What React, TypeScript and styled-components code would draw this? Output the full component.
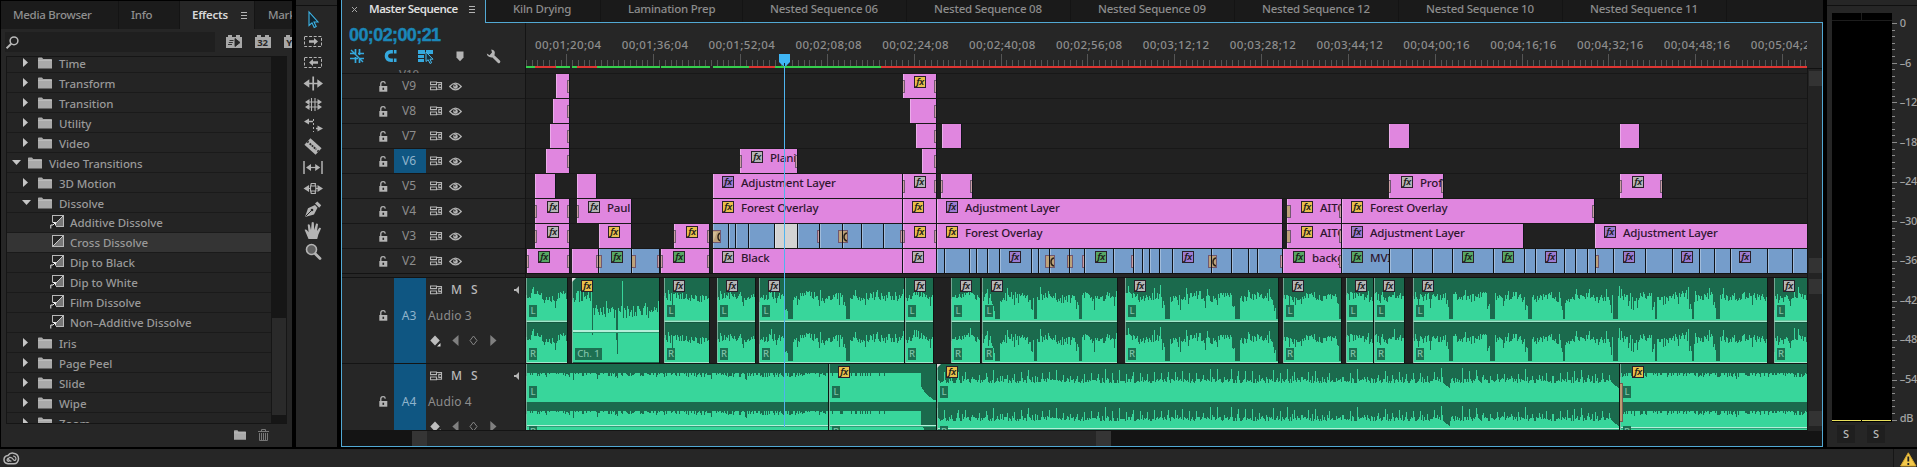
import React from "react";
import styled, { createGlobalStyle } from "styled-components";

const Global = createGlobalStyle`
  *, *::before, *::after { box-sizing: border-box; }
  body { margin: 0; background: #000; overflow: hidden; }
  svg { display: block; flex: none; }
`;

const UI = `"Noto Sans", "Open Sans", sans-serif`;
const BLUE = "#52a9d4";

/* ---------- shell ---------- */

const Shell = styled.div`
  width: 1917px;
  height: 467px;
  display: flex;
  flex-direction: column;
  background: #000;
  color: #9a9a9a;
  font: 500 11.5px/1 ${UI};
  letter-spacing: -0.04px;
  white-space: nowrap;
  overflow: hidden;
  user-select: none;
`;

const Workspace = styled.div`
  flex: none;
  height: 449px;
  display: flex;
`;

/* ---------- effects panel ---------- */

const EffectsPanel = styled.section`
  flex: none;
  width: 291px;
  height: 446px;
  margin: 1px 4px 0 1px;
  background: #262626;
  display: flex;
  flex-direction: column;
  overflow: hidden;
`;

const PanelTabs = styled.div`
  flex: none;
  height: 28px;
  display: flex;
  background: #1b1b1b;
`;

const PanelTab = styled.div<{ $w: number; $pad: number; $active?: boolean }>`
  flex: none;
  width: ${(p) => p.$w}px;
  padding-left: ${(p) => p.$pad}px;
  display: flex;
  align-items: center;
  gap: 13px;
  border-right: 1px solid #141414;
  background: ${(p) => (p.$active ? "#262626" : "#1b1b1b")};
  color: ${(p) => (p.$active ? "#d8d8d8" : "#8f8f8f")};
  font-weight: ${(p) => (p.$active ? 600 : 500)};
  letter-spacing: -0.28px;
`;

const SearchRow = styled.div`
  flex: none;
  height: 27px;
  padding: 3px 0 0 4px;
  display: flex;
`;

const SearchBox = styled.div`
  flex: none;
  width: 210px;
  height: 20px;
  padding: 4px 1px;
  background: #1f1f1f;
`;

const FilterIcons = styled.div`
  display: flex;
  gap: 13px;
  padding: 3px 0 0 11px;
`;

const TreeFrame = styled.div`
  flex: none;
  width: 281px;
  height: 368px;
  margin-left: 5px;
  border: 1px solid #151515;
  border-right: 0;
  display: flex;
  overflow: hidden;
`;

const Tree = styled.div`
  width: 264px;
  margin-top: -4px;
  flex: none;
`;

const TreeRow = styled.div<{ $indent: number; $leaf?: boolean; $selected?: boolean }>`
  height: 20px;
  padding: ${(p) => (p.$leaf ? 0 : 2)}px 0 0 ${(p) => p.$indent}px;
  display: flex;
  align-items: center;
  border-bottom: 1px solid #1a1a1a;
  background: ${(p) => (p.$selected ? "#343434" : "#242424")};
  color: #999;
`;

const Twisty = styled.span`
  width: 16px;
  flex: none;
  margin-top: -2px;
`;

const RowIcon = styled.span<{ $w: number }>`
  width: ${(p) => p.$w}px;
  flex: none;
  margin-top: -2px;
`;

const TreeScroll = styled.div`
  width: 16px;
  padding: 261px 1px 0;
  background: #161616;
`;

const TreeThumb = styled.div`
  height: 97px;
  background: #2a2a2a;
`;

const PanelFooter = styled.div`
  flex: 1;
  display: flex;
  gap: 12px;
  padding: 5px 0 0 233px;
`;

/* ---------- tools ---------- */

const ToolPanel = styled.nav`
  flex: none;
  width: 41px;
  height: 447px;
  background: #262626;
  display: flex;
  flex-direction: column;
`;

const PanelCap = styled.div`
  flex: none;
  height: 6px;
  border-bottom: 1px solid #101010;
`;

const ToolCell = styled.div<{ $first?: boolean }>`
  height: 21px;
  margin-top: ${(p) => (p.$first ? 4 : 0)}px;
  padding-left: 7px;
  display: flex;
  align-items: center;
`;

/* ---------- timeline ---------- */

const Timeline = styled.section`
  flex: none;
  width: 1482px;
  height: 447px;
  margin: 0 4px;
  border: 1px solid ${BLUE};
  border-top: 0;
  border-right: 0;
  background: #262626;
  display: flex;
  flex-direction: column;
`;

const SeqTabs = styled.div`
  flex: none;
  height: 23px;
  display: flex;
`;

const ActiveTab = styled.div`
  width: 143px;
  padding: 0 0 5px 9px;
  display: flex;
  align-items: center;
  color: #dedede;
  font-weight: 600;
  letter-spacing: -0.52px;
`;

const TabName = styled.span`
  flex: none;
  width: 111px;
  padding-left: 11px;
`;

const InactiveTabs = styled.div`
  flex: 1;
  display: flex;
  background: #1a1a1a;
  border-left: 1px solid ${BLUE};
  border-bottom: 1px solid ${BLUE};
`;

const SeqTab = styled.div<{ $w: number }>`
  flex: none;
  width: ${(p) => p.$w}px;
  padding: 0 0 4px 27px;
  display: flex;
  align-items: center;
  border-right: 1px solid #141414;
  color: #8c8c8c;
  letter-spacing: -0.22px;
`;

const Body = styled.div`
  flex: 1;
  min-height: 0;
  display: flex;
  flex-direction: column;
  border-right: 1px solid ${BLUE};
`;

const Upper = styled.div`
  flex: none;
  height: 408px;
  display: flex;
  position: relative;
`;

const HeaderCol = styled.div`
  flex: none;
  width: 184px;
  border-right: 1px solid #141414;
  background: #262626;
`;

const Controls = styled.div`
  height: 45px;
  padding: 3px 0 0 7px;
`;

const Timecode = styled.div`
  height: 18px;
  color: #1b87b8;
  font: bold 18px/18px "Liberation Sans", Arial, sans-serif;
  letter-spacing: -0.6px;
  -webkit-text-stroke: 0.4px #1b87b8;
`;

const ControlIcons = styled.div`
  display: flex;
  height: 18px;
  align-items: center;
  padding: 6px 0 0 1px;
`;

const ControlIcon = styled.span<{ $w: number }>`
  width: ${(p) => p.$w}px;
`;

const Sliver = styled.div<{ $lane?: boolean }>`
  height: 5px;
  padding-left: ${(p) => (p.$lane ? 0 : 57)}px;
  line-height: 11px;
  color: #777;
  overflow: hidden;
  background: ${(p) => (p.$lane ? "#212121" : "#262626")};
`;

const VideoHeader = styled.div`
  height: 25px;
  border-top: 1px solid #171717;
  display: flex;
  align-items: center;
  padding-left: 37px;
`;

const TrackName = styled.div<{ $on?: boolean; $audio?: boolean }>`
  width: 32px;
  align-self: stretch;
  margin: 0 4px 0 6px;
  padding: 0 2px ${(p) => (p.$audio ? 10 : 0)}px 0;
  display: flex;
  align-items: center;
  justify-content: center;
  font-size: 12px;
  font-weight: 400;
  background: ${(p) => (p.$on ? "#0f5682" : "transparent")};
  color: ${(p) => (p.$on ? "#8fb4cc" : "#8d8d8d")};
`;

const LockSlot = styled.span`
  margin-bottom: 10px;
`;

const Divider = styled.div`
  height: 5px;
  background: #262626;
  border-top: 1px solid #131313;
  border-bottom: 1px solid #131313;
`;

const AudioHeader = styled.div<{ $h: number }>`
  height: ${(p) => p.$h}px;
  border-bottom: 1px solid #141414;
  overflow: hidden;
`;

const AudioHeaderInner = styled.div`
  height: 85px;
  display: flex;
  padding-left: 37px;
  align-items: center;
`;

const AudioControls = styled.div`
  flex: 1;
  margin-left: -2px;
  height: 85px;
  font-size: 12px;
  font-weight: 400;
  color: #8d8d8d;
`;

const AudioTop = styled.div`
  height: 24px;
  display: flex;
  align-items: center;
  padding-left: 2px;
  color: #b9b9b9;
  font-size: 12px;
  font-weight: 500;
`;

const Cell = styled.span<{ $w: number }>`
  flex: none;
  width: ${(p) => p.$w}px;
`;

const AudioTitle = styled.div`
  height: 27px;
  line-height: 27px;
  letter-spacing: 0.15px;
`;

const KeyRow = styled.div`
  height: 23px;
  display: flex;
  align-items: center;
  padding-left: 2px;
`;

const LaneCol = styled.div`
  flex: none;
  width: 1281px;
  overflow: hidden;
`;

const Ruler = styled.div`
  height: 45px;
  display: flex;
  flex-direction: column;
  overflow: hidden;
`;

const RulerLabels = styled.div`
  height: 31px;
  margin-left: -1.2px;
  padding-top: 16px;
  display: flex;
  font-size: 11.5px;
  letter-spacing: 0.42px;
  color: #8d8d8d;
`;

const RulerLabel = styled.span`
  flex: none;
  width: 86.85px;
  text-align: center;
`;

const RenderBar = styled.div`
  flex: none;
  height: 2px;
  display: flex;
`;

const RenderSeg = styled.i<{ $c: string }>`
  flex: none;
  background: ${(p) => p.$c};
`;

const Lane = styled.div`
  height: 25px;
  border-top: 1px solid #181818;
  background: #212121;
  display: flex;
`;

const COLORS: Record<string, string> = {
  p: "#e086df",
  b: "#759dcb",
  w: "#d3d3d3",
};

const ClipBox = styled.div<{ $kind: string }>`
  flex: none;
  height: 24px;
  display: flex;
  position: relative;
  background: ${(p) => COLORS[p.$kind]};
  box-shadow: 1px 0 0 #10131a, inset 1px 0 0 rgba(255, 255, 255, 0.32);
`;

const ClipContent = styled.div`
  display: flex;
  overflow: hidden;
  padding-top: 2px;
  min-width: 0;
  flex: 1;
`;

const ClipName = styled.span`
  margin: -1px 0 0 7px;
  color: #2e152e;
  font-size: 11.5px;
  font-weight: 500;
  line-height: 15px;
  letter-spacing: -0.16px;
`;

const FX: Record<string, string> = {
  y: "#e8bf4b",
  g: "#b5b5b5",
  u: "#9c7bd0",
  n: "#57a764",
};

const FxBadge = styled.span<{ $c: string }>`
  display: block;
  flex: none;
  width: 12px;
  height: 12px;
  border: 1px solid #2a1f2a;
  background: ${(p) => FX[p.$c]};
  color: #191919;
  font: italic 600 9.5px/9px "Noto Sans", sans-serif;
  letter-spacing: -0.4px;
  text-align: center;
  overflow: hidden;
`;

const Transition = styled.i<{ $side: "l" | "r"; $size: number }>`
  position: absolute;
  top: 6px;
  ${(p) => (p.$side === "l" ? "left: 0;" : "right: 0;")}
  width: ${(p) => (p.$size > 1 ? p.$size : 2)}px;
  height: 13px;
  background: ${(p) => (p.$size > 1 ? "#bda27a" : "#cba0a4")};
  border: 1px solid #715870;
  border-${(p) => (p.$side === "l" ? "left" : "right")}: 0;
`;

const TransitionMark = styled.svg`
  margin-top: 1px;
`;

const AudioLane = styled.div<{ $h: number }>`
  height: ${(p) => p.$h}px;
  border-bottom: 1px solid #141414;
  background: #212121;
  display: flex;
  overflow: hidden;
`;

const AudioClip = styled.div`
  flex: none;
  height: 85px;
  position: relative;
  background: #1b6a4d;
  box-shadow: 1px 0 0 #0d1512;
`;

const AudioBadge = styled.div`
  position: absolute;
  top: 2px;
`;

const AudioTransition = styled.i`
  position: absolute;
  left: 0;
  top: 19px;
  width: 3px;
  height: 39px;
  background: #bb9b73;
  border: 1px solid #7c5b52;
  border-left: 0;
`;

const Channel = styled.span<{ $top: number; $w?: number }>`
  position: absolute;
  left: 3px;
  top: ${(p) => p.$top}px;
  width: ${(p) => p.$w ?? 8}px;
  height: 12px;
  background: #1d7052;
  color: #7fc2a8;
  font-size: 9.5px;
  font-weight: 500;
  line-height: 12px;
  text-align: center;
`;

const ScrollCol = styled.div`
  flex: 1;
  padding-left: 1px;
  display: flex;
  flex-direction: column;
  background: #232323;
  border-left: 1px solid #151515;
`;

const ScrollHead = styled.div`
  height: 46px;
  margin-left: -2px;
  background: #262626;
  border-bottom: 1px solid #111;
`;

const VThumb = styled.i<{ $mt: number; $h?: number }>`
  height: ${(p) => p.$h ?? 15}px;
  margin-top: ${(p) => p.$mt}px;
  background: #333;
`;

const HScroll = styled.div`
  flex: 1;
  display: flex;
  background: #141414;
  padding-left: 70px;
`;

const HThumb = styled.div`
  width: 699px;
  background: #262626;
  border: solid #353535;
  border-width: 0 15px;
`;

const Playhead = styled.div`
  position: absolute;
  left: 437px;
  top: 31px;
  width: 11px;
  height: 373px;
`;

/* ---------- meters ---------- */

const Meters = styled.aside`
  width: 90px;
  height: 447px;
  background: #262626;
  display: flex;
  flex-direction: column;
`;

const MeterMain = styled.div`
  display: flex;
  padding: 7px 0 0 5px;
  height: 418px;
`;

const MeterBars = styled.div`
  width: 60px;
  height: 409px;
  display: grid;
  grid-template-columns: 1fr 1fr;
  grid-template-rows: 8px 1fr;
  background: #000;
`;

const MeterCap = styled.i`
  border-bottom: 1px solid #1d1d1d;
  &:first-child { border-right: 1px solid #1d1d1d; }
`;

const MeterBar = styled.i`
  margin: 0 1px 1px 0;
  border-bottom: 1px solid #e9e05c;
`;

const MeterScale = styled.div`
  display: flex;
`;

const ScaleLabels = styled.div`
  margin-left: 2px;
  padding-top: 3px;
  color: #a3a3a3;
  font-size: 11px;
  letter-spacing: -0.3px;
`;

const ScaleLabel = styled.div`
  height: 39.5px;
  line-height: 14px;
`;

const SoloRow = styled.div`
  display: flex;
  gap: 12px;
  padding: 1px 0 0 10px;
`;

const Solo = styled.button`
  width: 18px;
  height: 18px;
  padding: 0;
  border: 0;
  background: #1f1f1f;
  color: #b9b9b9;
  font: 500 11px/16px ${UI};
`;

const StatusBar = styled.footer`
  height: 18px;
  background: #262626;
  display: flex;
  justify-content: space-between;
  padding-left: 3px;
`;

const Alerts = styled.div`
  width: 24px;
  padding: 3px 0 0 6px;
  border-left: 1px solid #161616;
`;

/* ---------- icons ---------- */

const C = "#b4b4b4";

const Burger = ({ color = C }: { color?: string }) => (
  <svg width="6" height="9" stroke={color} shapeRendering="crispEdges">
    <path d="M0 1.5H6M0 4.5H6M0 7.5H6" />
  </svg>
);

const Folder = ({ w = 14, h = 12 }: { w?: number; h?: number }) => (
  <svg width={w} height={h} viewBox="0 0 14 12">
    <path d="M0 1.2Q0 .5 .8 .5H4L5.2 2H13.4Q14 2 14 2.8V11.5H0Z" fill="#a9a9a9" />
    <path d="M0 3.5H14" stroke="#c2c2c2" strokeWidth=".7" />
  </svg>
);

const Arrow = ({ open }: { open?: boolean }) => (
  <svg width="9" height="9">
    <path d={open ? "M0 2H9L4.5 7Z" : "M1 0V9L6 4.5Z"} fill="#c6c6c6" />
  </svg>
);

const Effect = ({ tag }: { tag?: boolean }) => (
  <svg width="15" height="15" viewBox="0 0 15 15">
    <rect x="2.5" y="1.5" width="11" height="11" fill="#262626" stroke="#b9b9b9" />
    <path d="M13 2V12H3Z" fill="#777" />
    <path d="M3 12L13 2" stroke="#c9c9c9" />
    {tag && (
      <g>
        <rect x="0" y="8" width="6" height="6" fill="#1c1c1c" />
        <path d="M2.5 8.5H5.5V11.5M5.5 8.5L3 11M3 11H.8V14.5" fill="none" stroke="#eee" />
      </g>
    )}
  </svg>
);

const Filter = ({ text, w = 16 }: { text?: string; w?: number }) => (
  <svg width={w} height="14" viewBox={`0 0 ${w} 14`}>
    <path d="M0 2H2V0H6V2H10V0H14V2H16V13H0Z" fill="#a8a8a8" />
    {text ? (
      <text x="2.2" y="11" fontFamily="Noto Sans" fontWeight="700" fontSize="9.5" letterSpacing="0" fill="#262626">
        {text}
      </text>
    ) : (
      <path d="M9 3.5V11.5L14 7.5ZM3.5 5.5H7.5M2.8 7.5H6.8M2 9.5H6" fill="#262626" stroke="#262626" strokeWidth=".9" />
    )}
  </svg>
);

const Magnifier = () => (
  <svg width="13" height="13" fill="none" stroke="#b8b8b8" strokeWidth="1.5">
    <circle cx="8" cy="4.8" r="3.9" />
    <path d="M5.2 7.8L.6 12.3" strokeWidth="1.9" />
  </svg>
);

const Trash = () => (
  <svg width="11" height="12" fill="none" stroke="#777">
    <path d="M0 2.5H11M3.5 2V.5H7.5V2M1.5 4V11.5H9.5V4M3.5 4V11M5.5 4V11M7.5 4V11" />
  </svg>
);

const toolShapes: React.ReactNode[] = [
  <path d="M6 2V15.5L9 12.8L11.2 17.5L13.2 16.5L11 12H15Z" fill="#10242f" stroke="#3fb4e6" strokeWidth="1.1" />,
  <>
    <rect x="1.5" y="5.5" width="17" height="10" fill="none" stroke={C} strokeDasharray="3 1.6" />
    <path d="M6 9.2H11V7L15 10.5L11 14V11.8H6Z" fill={C} />
  </>,
  <>
    <rect x="1.5" y="5.5" width="17" height="10" fill="none" stroke={C} strokeDasharray="3 1.6" />
    <path d="M15 9.2H10V7L6 10.5L10 14V11.8H15Z" fill={C} />
  </>,
  <>
    <path d="M10.2 3.5V17.5M4 10.5H17" stroke={C} strokeWidth="1.7" />
    <path d="M.5 10.5L6.3 6.3V14.7ZM20 10.5L14.3 6.3V14.7Z" fill={C} />
  </>,
  <>
    <path d="M8.5 4V17M12 4V17M5 8H16M5 13H16" stroke={C} strokeWidth="1.1" />
    <path d="M2 8L6.5 5V11ZM19 8L14.5 5V11ZM2 13L6.5 10V16ZM19 13L14.5 10V16Z" fill={C} />
  </>,
  <>
    <path d="M4 6.5H10M13 13.5H16" stroke={C} strokeWidth="1.3" />
    <path d="M1 6.5L6 3.5V9.5ZM20 13.5L14.5 10.5V16.5Z" fill={C} />
    <path d="M10.5 4V17" stroke={C} strokeDasharray="2 2" />
  </>,
  <g transform="rotate(42 10 10.5)">
    <rect x="2.5" y="6" width="15" height="9" fill={C} />
    <path d="M5.5 10.5H14.5" stroke="#2a2a2a" strokeWidth="1.8" strokeDasharray="2 .8" />
    <path d="M2.5 10.5H4M16 10.5H17.5" stroke="#262626" strokeWidth="2" />
  </g>,
  <>
    <path d="M1 4V17M19 4V17" stroke={C} strokeWidth="1.5" />
    <path d="M5 10.5H15" stroke={C} strokeWidth="1.2" />
    <path d="M3 10.5L8 7V14ZM17.2 10.5L12.2 7V14Z" fill={C} />
  </>,
  <>
    <path d="M.5 10.5L6 7V14ZM20 10.5L14.5 7V14Z" fill={C} />
    <path d="M5 10.5H7.2M13 10.5H15M7.5 8V13H12.8V8ZM8 5.5H12.3V8M8 5.5V8M8 15.5H12.3V13M8 15.5V13" fill="none" stroke={C} strokeWidth="1.2" />
  </>,
  <>
    <path d="M2 18L5 9.2L12 6L14.5 8.8L11 15.5Z" fill={C} />
    <path d="M12 4.5L14.3 2.5L18.2 6.3L16.2 8.7Z" fill={C} />
    <path d="M2.5 17.5L8.5 11.5" stroke="#262626" />
    <circle cx="9" cy="11" r="1.3" fill="#262626" />
  </>,
  <path d="M5.5 19L3 13L1.6 9.8Q3 8.8 4.3 10.5L5.6 12.3L4.7 4.8Q5.6 3.6 6.7 4.8L8 10L8.7 2.6Q9.8 1.5 10.8 2.6L11.2 10L13 3.8Q14.2 3 15 4.2L14 11L16.3 7.8Q17.6 7.3 18 8.6L15.4 14.5L14.2 19Z" fill={C} />,
  <>
    <path d="M11.5 12L17 17.5" stroke={C} strokeWidth="2.8" strokeLinecap="round" />
    <circle cx="8.5" cy="8.5" r="5" fill="#606060" stroke={C} strokeWidth="1.6" />
  </>,
];

const Lock = () => (
  <svg width="9" height="11">
    <path d="M1.8 5V2.6Q2 .7 4.2 .7Q6 .7 6.3 2.6" fill="none" stroke={C} strokeWidth="1.3" />
    <rect x=".3" y="5" width="8" height="5.7" fill={C} />
    <rect x="3.5" y="6.7" width="1.6" height="2.2" fill="#262626" />
  </svg>
);

const Sync = () => (
  <svg width="13" height="10" fill="none" stroke={C} strokeWidth="1.1">
    <path d="M.5 1H6.5V3.6H.5ZM.5 6H6.5V8.8H.5ZM6.5 1.5H11.5V8.2H6.5M8.8 3.4H11.5V6.4H8.8Z" />
  </svg>
);

const Eye = () => (
  <svg width="13" height="9">
    <path d="M.7 4.5Q6.5 -2.2 12.3 4.5Q6.5 11.2 .7 4.5Z" fill="none" stroke={C} strokeWidth="1.2" />
    <circle cx="6.5" cy="4.4" r="2.3" fill={C} />
    <circle cx="5.9" cy="3.8" r=".8" fill="#262626" />
  </svg>
);

const FxMark = ({ c }: { c: string }) => <FxBadge $c={c}>fx</FxBadge>;

/* ---------- data ---------- */

const X0 = 526;

/** l and r give the size of the transition at each end; 1 is the narrow kind. */
type Clip = {
  s: number;
  e: number;
  k: string;
  fx?: string;
  at?: number;
  name?: string;
  l?: number;
  r?: number;
};

const clip = (s: number, e: number, k = "p", o: Partial<Clip> = {}): Clip => ({ s, e, k, ...o });

/** Splits a run of footage at each cut point; marks add details to a piece by its index. */
const run = (start: number, cuts: number[], marks: Record<number, Partial<Clip>> = {}) =>
  cuts.map((e, i) => clip(i ? cuts[i - 1] + 1 : start, e, "b", marks[i]));

const videoTracks: { name: string; on?: boolean; clips: Clip[] }[] = [
  { name: "V9", clips: [clip(556, 569, "p", { r: 1 }), clip(903, 936, "p", { fx: "y", at: 914, l: 1, r: 1 })] },
  { name: "V8", clips: [clip(553, 569, "p", { r: 1 }), clip(910, 936, "p", { r: 1 })] },
  {
    name: "V7",
    clips: [clip(550, 569, "p", { r: 1 }), clip(916, 936, "p", { r: 1 }), clip(942, 961), clip(1389, 1409), clip(1620, 1639)],
  },
  {
    name: "V6",
    on: true,
    clips: [
      clip(546, 569, "p", { r: 1 }),
      clip(740, 797, "p", { fx: "g", at: 751, name: "Plani", l: 1, r: 1 }),
      clip(922, 936, "p", { r: 1 }),
    ],
  },
  {
    name: "V5",
    clips: [
      clip(535, 555),
      clip(577, 596),
      clip(713, 902, "p", { fx: "u", at: 722, name: "Adjustment Layer" }),
      clip(903, 936, "p", { fx: "g", at: 914, l: 1, r: 1 }),
      clip(941, 972, "p", { l: 1, r: 1 }),
      clip(1389, 1443, "p", { fx: "g", at: 1401, name: "Prof", l: 1, r: 1 }),
      clip(1620, 1662, "p", { fx: "g", at: 1632, l: 1, r: 1 }),
    ],
  },
  {
    name: "V4",
    clips: [
      clip(535, 569, "p", { fx: "g", at: 547, l: 1, r: 1 }),
      clip(577, 631, "p", { fx: "g", at: 588, name: "Paul", l: 1 }),
      clip(713, 902, "p", { fx: "y", at: 722, name: "Forest Overlay" }),
      clip(903, 936, "p", { fx: "y", at: 912 }),
      clip(937, 1282, "p", { fx: "u", at: 946, name: "Adjustment Layer" }),
      clip(1287, 1341, "p", { fx: "y", at: 1301, name: "AITC", l: 4, r: 1 }),
      clip(1342, 1594, "p", { fx: "y", at: 1351, name: "Forest Overlay", r: 1 }),
    ],
  },
  {
    name: "V3",
    clips: [
      clip(535, 569, "p", { fx: "g", at: 547, l: 1, r: 1 }),
      clip(599, 631, "p", { fx: "y", at: 608 }),
      clip(674, 709, "p", { fx: "y", at: 686, l: 1, r: 1 }),
      clip(713, 728, "b", { l: 8 }),
      ...run(729, [735, 748, 774]),
      clip(775, 797, "w"),
      ...run(798, [819, 842, 861, 883, 902], { 0: { r: 1 }, 1: { r: 4 }, 2: { l: 5 }, 4: { r: 1 } }),
      clip(903, 936, "p", { fx: "y", at: 914, l: 1, r: 1 }),
      clip(937, 1282, "p", { fx: "y", at: 946, name: "Forest Overlay" }),
      clip(1287, 1341, "p", { fx: "y", at: 1301, name: "AITC", l: 4, r: 1 }),
      clip(1342, 1523, "p", { fx: "u", at: 1351, name: "Adjustment Layer" }),
      clip(1595, 1807, "p", { fx: "u", at: 1604, name: "Adjustment Layer" }),
    ],
  },
  {
    name: "V2",
    clips: [
      clip(527, 569, "p", { fx: "n", at: 538, l: 1, r: 1 }),
      clip(572, 598, "p", { r: 1 }),
      clip(599, 631, "b", { fx: "n", at: 611, l: 3 }),
      clip(632, 659, "b", { l: 4, r: 1 }),
      clip(661, 709, "p", { fx: "n", at: 673, l: 1, r: 1 }),
      clip(713, 902, "p", { fx: "g", at: 722, name: "Black" }),
      clip(903, 936, "p", { fx: "g", at: 912 }),
      ...run(937, [944, 969, 976, 987, 999, 1031, 1038, 1049, 1069, 1084, 1113, 1133, 1142, 1149, 1159, 1172, 1211, 1231, 1248, 1257, 1282], {
        5: { fx: "u", at: 1009 },
        7: { r: 4 },
        8: { l: 5, r: 2 },
        9: { l: 3, r: 1 },
        10: { fx: "n", at: 1095 },
        11: { r: 1 },
        16: { fx: "u", at: 1182, r: 3 },
        17: { l: 5 },
        20: { r: 1 },
      }),
      clip(1283, 1341, "p", { fx: "n", at: 1293, name: "backg", r: 1 }),
      ...run(1342, [1389, 1412, 1432, 1452, 1493, 1524, 1535, 1564, 1575, 1587, 1595, 1613, 1645, 1672, 1699, 1714, 1730, 1767, 1792, 1807], {
        0: { fx: "n", at: 1351, name: "MVI_" },
        4: { fx: "n", at: 1462 },
        5: { fx: "n", at: 1502 },
        7: { fx: "u", at: 1545 },
        11: { l: 3 },
        12: { fx: "u", at: 1623 },
        14: { fx: "u", at: 1681 },
        17: { fx: "u", at: 1739 },
      }),
    ],
  },
];

type Audio = {
  s: number;
  e: number;
  type: "stereo" | "mono" | "flat" | "peaks";
  fx?: [string, number];
  dips?: [number, number][];
  seed: number;
  line?: number;
  fade?: boolean;
  corner?: boolean;
  transition?: boolean;
};

const a3: Audio[] = [
  { s: 526, e: 567, type: "stereo", seed: 5 },
  { s: 572, e: 659, type: "mono", seed: 11, fx: ["y", 581], corner: true },
  { s: 664, e: 709, type: "stereo", seed: 21, fx: ["g", 673] },
  { s: 717, e: 755, type: "stereo", seed: 31, fx: ["g", 726] },
  { s: 759, e: 904, type: "stereo", seed: 41, fx: ["g", 768], dips: [[788, 792], [846, 849]] },
  { s: 905, e: 933, type: "stereo", seed: 51, fx: ["g", 914] },
  { s: 951, e: 980, type: "stereo", seed: 61, fx: ["g", 960] },
  { s: 982, e: 1117, type: "stereo", seed: 71, fx: ["g", 991], dips: [[995, 999], [1034, 1036], [1079, 1081]] },
  { s: 1125, e: 1278, type: "stereo", seed: 81, fx: ["g", 1134], dips: [[1165, 1169], [1235, 1239], [1276, 1278]] },
  { s: 1283, e: 1341, type: "stereo", seed: 91, fx: ["g", 1292], dips: [[1339, 1341]] },
  { s: 1346, e: 1373, type: "stereo", seed: 101, fx: ["g", 1355] },
  { s: 1374, e: 1404, type: "stereo", seed: 111, fx: ["g", 1383] },
  {
    s: 1413, e: 1767, type: "stereo", seed: 121, fx: ["g", 1422],
    dips: [[1449, 1452], [1490, 1494], [1528, 1531], [1563, 1564], [1613, 1617], [1655, 1656], [1692, 1693], [1716, 1719]],
  },
  { s: 1774, e: 1807, type: "stereo", seed: 131, fx: ["g", 1783] },
];

const a4: Audio[] = [
  { s: 526, e: 828, type: "flat", seed: 7, line: 61 },
  { s: 829, e: 936, type: "flat", seed: 17, line: 61, fx: ["y", 838], fade: true },
  { s: 937, e: 1619, type: "peaks", seed: 27, line: 64, fx: ["y", 946], corner: true, dips: [[1443, 1449]] },
  { s: 1620, e: 1807, type: "flat", seed: 37, line: 63, fx: ["y", 1632], transition: true },
];

/* ---------- waveforms ---------- */

const random = (seed: number) => {
  let s = (seed * 7919 + 13) % 233280;
  return () => {
    s = (s * 9301 + 49297) % 233280;
    return s / 233280;
  };
};

const levels = (a: Audio): number[] => {
  const rnd = random(a.seed);
  const out: number[] = [];
  for (let x = a.s; x < a.e; x++) {
    const r = rnd();
    const q = rnd();
    const dip = a.dips?.find(([f, t]) => x >= f && x <= t);
    let v: number;
    if (a.type === "stereo") {
      v = 19 + Math.sin(x / 5.3 + a.seed) * 2 + (r - 0.5) * 8;
      if (q > 0.93) v -= 6;
      else if (q < 0.05) v += 8;
      if (dip) v = 41;
      else if (a.dips?.some(([f]) => f - x > 0 && f - x < 4)) v += 9;
    } else if (a.type === "mono") {
      v = (x < 592 ? 18 : 34) + (r - 0.5) * 13;
      if (q > 0.85) v -= 9;
      if (x === 622) v = 3;
      if (x === 616 || x === 617) v = x === 616 ? 62 : 76;
      if (x === 592) v = 57;
    } else if (a.type === "flat") {
      v = 9 + (r > 0.55 ? (r - 0.5) * 9 : 0) + (q > 0.96 ? 3 : 0);
      if (a.fade) v = 9 + (x < 885 && r > 0.7 ? 3 : 0);
      if (a.fade && x > 920) v = Math.min(36, 18 + Math.sqrt((x - 920) * 24));
    } else {
      v = 17 + (r - 0.5) * 5;
      if ((x - 937) % 7 === 0) v -= 5 + q * 7;
      else if ((x - 937) % 5 === 0) v -= 4 * q;
      if (dip) v = 17 + (x - 1441) * 0.9;
      if (x > 1610) v = 17 + (x - 1610) * 0.9;
    }
    out.push(Math.round(v));
  }
  return out;
};

const area = (v: number[], top: number, floor: number) => {
  let d = `M0 ${floor}`;
  v.forEach((y, i) => (d += `V${Math.min(floor, top + y)}H${i + 1}`));
  return d + `V${floor}Z`;
};

const Waveform = ({ a }: { a: Audio }) => {
  const w = a.e - a.s;
  const v = levels(a);
  const bright = "#38d69b";
  return (
    <svg width={w} height="85" shapeRendering="crispEdges">
      {a.type === "stereo" && (
        <>
          <path d={area(v, 0, 42)} fill={bright} />
          <path d={area(v, 42, 84)} fill={bright} />
          <path d={`M0 43.5H${w}M0 84.5H${w}`} stroke="#9fe8cb" />
          <path d={`M0 42.5H${w}`} stroke="#67c9a0" />
          <path d={`M0 44.5H${w}`} stroke="#175740" />
        </>
      )}
      {a.type === "mono" && (
        <>
          <path d={area(v, 0, 84)} fill={bright} />
          <path d={`M1 53H${w}`} stroke="#b4efd9" strokeWidth="2" />
          <path d={`M1 54.5H${w}`} stroke="#2a9a70" />
        </>
      )}
      {(a.type === "flat" || a.type === "peaks") && (
        <>
          <path d={area(v, 0, 38)} fill={bright} />
          <path d={area(v, 38, 85)} fill={bright} />
          <path d={`M1 ${a.line! + 0.5}H${w}`} stroke="#b4efd9" strokeWidth="1" />
          <path d={`M1 ${a.line! + 1.5}H${w}`} stroke="#2f9f77" strokeWidth="1" />
        </>
      )}
      <path d="M.5 0V85" stroke="#8fb9a8" opacity=".75" />
      {a.corner && <path d="M0 0H4L0 4Z" fill="#ddd" shapeRendering="auto" />}
    </svg>
  );
};

const AudioTrack = ({ clips, h }: { clips: Audio[]; h: number }) => (
  <AudioLane $h={h}>
    {clips.map((a, i) => (
      <AudioClip key={a.s} style={{ marginLeft: a.s - (i ? clips[i - 1].e : X0), width: a.e - a.s }}>
        <Waveform a={a} />
        {a.fx && (
          <AudioBadge style={{ left: a.fx[1] - a.s }}>
            <FxMark c={a.fx[0]} />
          </AudioBadge>
        )}
        {a.type === "mono" ? (
          <Channel $top={70} $w={27}>Ch. 1</Channel>
        ) : (
          <>
            <Channel $top={a.type === "stereo" ? 27 : 22}>L</Channel>
            <Channel $top={a.type === "stereo" ? 70 : 62}>R</Channel>
          </>
        )}
        {a.transition && <AudioTransition />}
      </AudioClip>
    ))}
  </AudioLane>
);

const CrossMark = ({ w }: { w: number }) => (
  <TransitionMark width={w - 1} height="10" viewBox={`${w > 6 ? 0 : 4} 0 ${w - 1} 10`}>
    <path d="M0 0V10L4 0Z" fill="#d1bb94" />
    <path d="M8 1Q5 1.5 5 5Q5 8.5 8 9" fill="none" stroke="#2b2117" strokeWidth="1.4" />
  </TransitionMark>
);

const VideoLane = ({ clips }: { clips: Clip[] }) => (
  <Lane>
    {clips.map((c, i) => (
      <ClipBox key={c.s} $kind={c.k} style={{ marginLeft: c.s - (i ? clips[i - 1].e : X0), width: c.e - c.s }}>
        {c.l && (
          <Transition $side="l" $size={c.l}>
            {c.l > 4 && <CrossMark w={c.l} />}
          </Transition>
        )}
        <ClipContent style={{ paddingLeft: c.at ? c.at - c.s : 0 }}>
          {c.fx && <FxMark c={c.fx} />}
          {c.name && <ClipName>{c.name}</ClipName>}
        </ClipContent>
        {c.r && <Transition $side="r" $size={c.r} />}
      </ClipBox>
    ))}
  </Lane>
);

/* ---------- ruler ---------- */

const PITCH = 86.85;
const labels = [
  "00;01;20;04", "00;01;36;04", "00;01;52;04", "00;02;08;08", "00;02;24;08", "00;02;40;08", "00;02;56;08", "00;03;12;12",
  "00;03;28;12", "00;03;44;12", "00;04;00;16", "00;04;16;16", "00;04;32;16", "00;04;48;16", "00;05;04;20",
];

const ticks = (() => {
  let d = "";
  for (let i = -7; i < 15 * 15; i++) {
    const x = Math.floor(40.8 + (i * PITCH) / 15) + 0.5;
    d += `M${x} ${i % 15 === 0 ? 0 : 6}V12`;
  }
  return d;
})();

const G = "#35cf4d";
const R = "#df3532";
const N = "transparent";
const render: [number, string][] = [
  [9, G], [21, R], [14, G], [2, N], [5, G], [20, R], [63, G], [1, N], [49, G], [3, N], [36, G], [26, R], [106, G], [926, R],
];

/* ---------- tree ---------- */

const tree: [string, string, boolean?][] = [
  ["f2", "Time"], ["f2", "Transform"], ["f2", "Transition"], ["f2", "Utility"], ["f2", "Video"],
  ["f1", "Video Transitions", true], ["f2", "3D Motion"], ["f2", "Dissolve", true],
  ["e", "Additive Dissolve"], ["s", "Cross Dissolve"], ["e", "Dip to Black"], ["e", "Dip to White"],
  ["e", "Film Dissolve"], ["e", "Non–Additive Dissolve"],
  ["f2", "Iris"], ["f2", "Page Peel"], ["f2", "Slide"], ["f2", "Wipe"], ["f2", "Zoom"],
];

const scaleTicks = (() => {
  let d = "";
  for (let i = 0; i <= 60; i++) {
    const y = Math.round(10 + i * 6.61) + 0.5;
    d += `M0 ${y}H${i % 6 === 0 ? 5 : 3}`;
  }
  return d;
})();

const AudioHead = ({ n, h }: { n: number; h: number }) => (
  <AudioHeader $h={h}>
    <AudioHeaderInner>
      <LockSlot><Lock /></LockSlot>
      <TrackName $on $audio>A{n}</TrackName>
      <AudioControls>
        <AudioTop>
          <Cell $w={21}><Sync /></Cell>
          <Cell $w={20}>M</Cell>
          <Cell $w={43}>S</Cell>
          <svg width="5" height="8"><path d="M5 0V8L2 5H0V3H2Z" fill={C} /></svg>
        </AudioTop>
        <AudioTitle>Audio {n}</AudioTitle>
        <KeyRow>
          <Cell $w={22}>
            <svg width="11" height="12">
              <path d="M5 .5L9.8 5.5L5 10.5L.3 5.5Z" fill="#bdbdbd" />
              <path d="M10.5 8V11.5H7Z" fill="#ddd" />
            </svg>
          </Cell>
          <Cell $w={17}><svg width="7" height="11"><path d="M6.5 0V11L.3 5.5Z" fill="#808080" /></svg></Cell>
          <Cell $w={21}><svg width="9" height="11"><path d="M4.5 1L8 5.5L4.5 10L1 5.5Z" fill="none" stroke="#858585" /></svg></Cell>
          <svg width="7" height="11"><path d="M.3 0V11L6.5 5.5Z" fill="#808080" /></svg>
        </KeyRow>
      </AudioControls>
    </AudioHeaderInner>
  </AudioHeader>
);

export default function App() {
  return (
    <Shell>
      <Global />
      <Workspace>
        <EffectsPanel>
          <PanelTabs>
            <PanelTab $w={118} $pad={12}>Media Browser</PanelTab>
            <PanelTab $w={61} $pad={12}>Info</PanelTab>
            <PanelTab $w={75} $pad={12} $active>Effects <Burger /></PanelTab>
            <PanelTab $w={60} $pad={13}>Markers</PanelTab>
          </PanelTabs>
          <SearchRow>
            <SearchBox><Magnifier /></SearchBox>
            <FilterIcons>
              <Filter />
              <Filter text="32" />
              <Filter text="YU" />
            </FilterIcons>
          </SearchRow>
          <TreeFrame>
            <Tree>
              {tree.map(([kind, label, open]) => {
                const leaf = kind === "e" || kind === "s";
                return (
                  <TreeRow key={label} $indent={leaf ? 43 : kind === "f1" ? 5 : 15} $leaf={leaf} $selected={kind === "s"}>
                    {!leaf && <Twisty><Arrow open={open} /></Twisty>}
                    <RowIcon $w={leaf ? 20 : 21}>{leaf ? <Effect tag={kind === "e"} /> : <Folder />}</RowIcon>
                    {label}
                  </TreeRow>
                );
              })}
            </Tree>
            <TreeScroll><TreeThumb /></TreeScroll>
          </TreeFrame>
          <PanelFooter>
            <Folder w={12} h={12} />
            <Trash />
          </PanelFooter>
        </EffectsPanel>

        <ToolPanel>
          <PanelCap />
          {toolShapes.map((shape, i) => (
            <ToolCell key={i} $first={i === 0}>
              <svg width="21" height="21">{shape}</svg>
            </ToolCell>
          ))}
        </ToolPanel>

        <Timeline>
          <SeqTabs>
            <ActiveTab>
              <svg width="7" height="7" stroke="#a8a8a8"><path d="M1 1L6 6M6 1L1 6" /></svg>
              <TabName>Master Sequence</TabName>
              <Burger />
            </ActiveTab>
            <InactiveTabs>
              <SeqTab $w={115}>Kiln Drying</SeqTab>
              <SeqTab $w={142}>Lamination Prep</SeqTab>
              {["06", "08", "09", "12", "10", "11"].map((n) => (
                <SeqTab key={n} $w={164}>Nested Sequence {n}</SeqTab>
              ))}
            </InactiveTabs>
          </SeqTabs>
          <Body>
            <Upper>
              <HeaderCol>
                <Controls>
                  <Timecode>00;02;00;21</Timecode>
                  <ControlIcons>
                    <ControlIcon $w={34}>
                      <svg width="15" height="14" stroke="#35a9de" strokeWidth="1.7">
                        <path d="M0 4.5H5M8 4.5H14M0 9.5H8M10 9.5H14M5.5 0V5M5.5 8V14M9.5 0V6M9.5 10V14" />
                        <path d="M1 1L13 13" strokeWidth="1.4" />
                      </svg>
                    </ControlIcon>
                    <ControlIcon $w={34}>
                      <svg width="14" height="14">
                        <path d="M12.5 2.7H7Q2.4 3 2.4 7Q2.4 11 7 11.3H12.5" fill="none" stroke="#35a9de" strokeWidth="3.4" />
                        <path d="M9.4 0V14" stroke="#262626" strokeWidth="1" />
                      </svg>
                    </ControlIcon>
                    <ControlIcon $w={38}>
                      <svg width="17" height="15">
                        <path d="M0 1H7V5H0ZM8 1H15V5H8ZM0 6H6V9H0ZM0 10H6V13H0Z" fill="#35a9de" />
                        <path d="M8 3V12.5L10.2 10.7L12 14.5L13.6 13.7L12 10.2H15Z" fill="#15303d" stroke="#4bb9ea" />
                      </svg>
                    </ControlIcon>
                    <ControlIcon $w={30}>
                      <svg width="8" height="11"><path d="M.5 .5H7.5V6.5L4 10.2L.5 6.5Z" fill={C} /></svg>
                    </ControlIcon>
                    <svg width="15" height="15">
                      <path d="M6 6L12.8 12.6" stroke={C} strokeWidth="3" strokeLinecap="round" />
                      <path d="M5.2 .6Q9.8 1 8.6 5.8L6 8.4Q1.2 8.6 .8 4.6L3.6 6.2L6 3.6Z" fill={C} />
                    </svg>
                  </ControlIcons>
                </Controls>
                <Sliver>V10</Sliver>
                {videoTracks.map((t) => (
                  <VideoHeader key={t.name}>
                    <Lock />
                    <TrackName $on={t.on}>{t.name}</TrackName>
                    <Cell $w={19}><Sync /></Cell>
                    <Eye />
                  </VideoHeader>
                ))}
                <Divider />
                <AudioHead n={3} h={86} />
                <AudioHead n={4} h={67} />
              </HeaderCol>
              <LaneCol>
                <Ruler>
                  <RulerLabels>
                    {labels.map((l) => <RulerLabel key={l}>{l}</RulerLabel>)}
                  </RulerLabels>
                  <svg width="1281" height="12" stroke="#555" shapeRendering="crispEdges"><path d={ticks} /></svg>
                  <RenderBar>
                    {render.map(([w, c], i) => <RenderSeg key={i} $c={c} style={{ width: w }} />)}
                  </RenderBar>
                </Ruler>
                <Sliver $lane />
                {videoTracks.map((t) => <VideoLane key={t.name} clips={t.clips} />)}
                <Divider />
                <AudioTrack clips={a3} h={86} />
                <AudioTrack clips={a4} h={67} />
              </LaneCol>
              <ScrollCol>
                <ScrollHead />
                <VThumb $mt={2} />
                <VThumb $mt={172} />
                <VThumb $mt={6} />
                <VThumb $mt={117} />
              </ScrollCol>
              <Playhead>
                <svg width="11" height="373">
                  <path d="M0 0H11V8L7 12H4L0 8Z" fill="#3fb6f5" />
                  <path d="M5.5 9V12" stroke="#123" />
                  <path d="M5.5 12V373" stroke="#4fb4ee" />
                </svg>
              </Playhead>
            </Upper>
            <HScroll><HThumb /></HScroll>
          </Body>
        </Timeline>

        <Meters>
          <PanelCap />
          <MeterMain>
            <MeterBars>
              <MeterCap /><MeterCap /><MeterBar /><MeterBar />
            </MeterBars>
            <MeterScale>
              <svg width="6" height="411" stroke="#8a8a8a" shapeRendering="crispEdges"><path d={scaleTicks} /></svg>
              <ScaleLabels>
                {["0", "–6", "–12", "–18", "–24", "–30", "–36", "–42", "–48", "–54", "dB"].map((l) => (
                  <ScaleLabel key={l}>{l}</ScaleLabel>
                ))}
              </ScaleLabels>
            </MeterScale>
          </MeterMain>
          <SoloRow><Solo>S</Solo><Solo>S</Solo></SoloRow>
        </Meters>
      </Workspace>
      <StatusBar>
        <svg width="17" height="18" fill="none" stroke="#b5b5b5" strokeWidth="1.5">
          <path d="M5 14.7Q1 14.3 1 10.5Q1.2 7 5 6.5Q7 3.5 10.5 4.2Q15.5 5 15.5 9.8Q15 14.6 11 14.7Z" />
          <path d="M8.5 12Q6 12.3 5.5 10Q6 7.3 9 9L11 11.3Q13 11.5 13 9.5Q12.5 7 10 7M5 9L4 11Q4.5 12.5 6 12.4" strokeWidth="1.2" />
        </svg>
        <Alerts>
          <svg width="17" height="15">
            <path d="M8.3 .8L16 14H.6Z" fill="#f3c94b" stroke="#d2a42e" />
            <path d="M8.3 4.5V9.5M8.3 11V13" stroke="#222" strokeWidth="1.8" />
          </svg>
        </Alerts>
      </StatusBar>
    </Shell>
  );
}
